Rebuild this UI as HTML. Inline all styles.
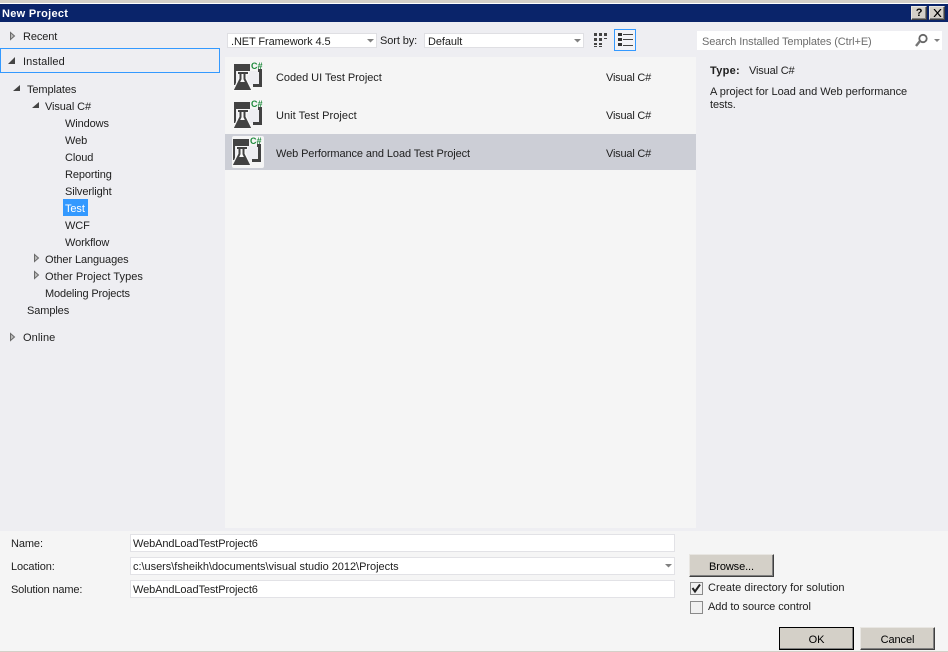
<!DOCTYPE html>
<html><head><meta charset="utf-8"><style>
html,body{margin:0;padding:0;width:948px;height:652px;overflow:hidden;background:#eeeef2}
body{position:relative;font:11px "Liberation Sans",sans-serif;color:#1e1e1e}
div,svg{position:absolute;box-sizing:border-box}
.t{white-space:nowrap;line-height:14px;height:14px;letter-spacing:-.1px}
.inp{background:#fff;border:1px solid #e2e2e6;height:18px;line-height:19px;padding-left:2px;white-space:nowrap;letter-spacing:-.1px}
.btn{background:#d4d0c8;border:1px solid;border-color:#e8e6e2 #404040 #404040 #e8e6e2;box-shadow:inset -1px -1px 0 #808080;text-align:center;letter-spacing:-.1px;color:#000}
.cb{width:13px;height:13px;background:#f0f0f0;border:1px solid #8a8a8a}
</style></head><body>
<div style="left:0;top:0;width:948px;height:4px;background:#d4d0c8;border-bottom:1px solid #fff"></div>
<div style="left:0;top:4px;width:948px;height:18px;background:#0a246a"></div>
<div class="t" style="left:2px;top:7px;color:#fff;font-weight:bold;letter-spacing:.3px">New Project</div>
<div class="btn" style="left:911px;top:6px;width:16px;height:14px;font:bold 11px/12px 'Liberation Sans';color:#000">?</div>
<div class="btn" style="left:929px;top:6px;width:16px;height:14px"><svg style="left:3px;top:2px" width="9" height="8"><path d="M1 0L8 8M8 0L1 8" stroke="#000" stroke-width="1.200"/></svg></div>

<!-- Left tree -->
<svg style="left:0;top:25px" width="60" height="330">
<path d="M10.500 7.500v7l4-3.500z" fill="#bbb" stroke="#6a6a6a"/>
<path d="M15 32v7h-7z" fill="#444"/>
<path d="M20 60v6h-7z" fill="#444"/>
<path d="M39 77v6h-7z" fill="#444"/>
<path d="M34.500 229.500v7l4-3.500z" fill="#bbb" stroke="#6a6a6a"/>
<path d="M34.500 246.500v7l4-3.500z" fill="#bbb" stroke="#6a6a6a"/>
<path d="M10.500 308.500v7l4-3.500z" fill="#bbb" stroke="#6a6a6a"/>
</svg>
<div class="t" style="left:23px;top:30px">Recent</div>
<div style="left:0;top:48px;width:220px;height:25px;border:1px solid #3399ff"></div>
<div class="t" style="left:23px;top:55px;letter-spacing:.1px">Installed</div>
<div class="t" style="left:27px;top:83px">Templates</div>
<div class="t" style="left:45px;top:100px">Visual C#</div>
<div class="t" style="left:65px;top:117px">Windows</div>
<div class="t" style="left:65px;top:134px">Web</div>
<div class="t" style="left:65px;top:151px">Cloud</div>
<div class="t" style="left:65px;top:168px">Reporting</div>
<div class="t" style="left:65px;top:185px">Silverlight</div>
<div style="left:63px;top:199px;width:25px;height:17px;background:#3399ff"></div>
<div class="t" style="left:65px;top:202px;color:#fff">Test</div>
<div class="t" style="left:65px;top:219px">WCF</div>
<div class="t" style="left:65px;top:236px">Workflow</div>
<div class="t" style="left:45px;top:253px">Other Languages</div>
<div class="t" style="left:45px;top:270px;letter-spacing:.05px">Other Project Types</div>
<div class="t" style="left:45px;top:287px;letter-spacing:-.15px">Modeling Projects</div>
<div class="t" style="left:27px;top:304px">Samples</div>
<div class="t" style="left:23px;top:331px;letter-spacing:.1px">Online</div>

<!-- Toolbar -->
<div class="inp" style="left:227px;top:33px;width:150px;height:15px;line-height:16px;padding-left:3px;border-color:#dfdfe3">.NET Framework 4.5</div>
<svg style="left:367px;top:39px" width="8" height="4"><path d="M0 0h7l-3.500 3.500z" fill="#808080"/></svg>
<div class="t" style="left:380px;top:34px">Sort by:</div>
<div class="inp" style="left:424px;top:33px;width:160px;height:15px;line-height:16px;padding-left:3px;border-color:#dfdfe3">Default</div>
<svg style="left:574px;top:39px" width="8" height="4"><path d="M0 0h7l-3.500 3.500z" fill="#808080"/></svg>
<svg style="left:594px;top:33px" width="14" height="15" fill="#444"><path d="M0 0h3v3H0zM5 0h3v3H5zM10 0h3v3h-3zM0 5h3v3H0zM5 5h3v3H5zM10 5h3v1h-3zM0 10h3v2H0zM5 10h3v2H5zM0 13h3v1H0zM5 13h3v1H5z"/></svg>
<div style="left:614px;top:29px;width:22px;height:22px;border:1px solid #3399ff;background:#f3f3f6"></div>
<svg style="left:618px;top:33px" width="15" height="14"><path d="M0 0h4v3H0zM0 5h4v3H0zM0 10h4v3H0z" fill="#333"/><path d="M5 1.500h10M5 6.500h10M5 12.500h10" stroke="#444" stroke-width="1" fill="none"/></svg>
<div style="left:697px;top:31px;width:245px;height:19px;background:#fff"></div>
<div class="t" style="left:702px;top:35px;color:#6d6d6d">Search Installed Templates (Ctrl+E)</div>
<svg style="left:914px;top:33px" width="26" height="15"><circle cx="9" cy="5.500" r="3.700" fill="none" stroke="#666" stroke-width="1.800"/><path d="M6 8L2 13" stroke="#777" stroke-width="2.400"/><path d="M20 6h6l-3 3z" fill="#808080"/></svg>

<!-- Center list -->
<div style="left:225px;top:57px;width:471px;height:472px;background:#f5f5f5"></div>
<div style="left:225px;top:134px;width:471px;height:36px;background:#ccced6"></div>
<div style="left:232px;top:136px;width:32px;height:32px;background:#f5f5f5;border-radius:2px"></div>

<svg style="left:233px;top:62px" width="30" height="30"><rect x="1" y="2" width="16" height="7" fill="#424242"/><rect x="1" y="2" width="2" height="21" fill="#424242"/><rect x="3" y="9" width="23" height="14" fill="#eeeef2"/><path d="M25 7h4v18h-9v-3h6V10h-1z" fill="#424242"/><path d="M4 9h12v4h-2v3l5 12v1H0v-1l5-12v-3H4z" fill="#f8f8f8"/><path d="M7.500 12v5l-5 10h14l-5-10v-5" fill="#f8f8f8" stroke="#424242" stroke-width="2"/><rect x="5" y="10" width="10" height="2" fill="#424242"/><path d="M5.500 20h8l3.500 8H2z" fill="#424242"/><text x="18" y="7" font-family="Liberation Sans" font-weight="bold" font-size="9" fill="#1e8a3c">C#</text></svg>
<svg style="left:233px;top:100px" width="30" height="30"><rect x="1" y="2" width="16" height="7" fill="#424242"/><rect x="1" y="2" width="2" height="21" fill="#424242"/><rect x="3" y="9" width="23" height="14" fill="#eeeef2"/><path d="M25 7h4v18h-9v-3h6V10h-1z" fill="#424242"/><path d="M4 9h12v4h-2v3l5 12v1H0v-1l5-12v-3H4z" fill="#f8f8f8"/><path d="M7.500 12v5l-5 10h14l-5-10v-5" fill="#f8f8f8" stroke="#424242" stroke-width="2"/><rect x="5" y="10" width="10" height="2" fill="#424242"/><path d="M5.500 20h8l3.500 8H2z" fill="#424242"/><text x="18" y="7" font-family="Liberation Sans" font-weight="bold" font-size="9" fill="#1e8a3c">C#</text></svg>
<svg style="left:232px;top:137px" width="30" height="30"><rect x="1" y="2" width="16" height="7" fill="#424242"/><rect x="1" y="2" width="2" height="21" fill="#424242"/><rect x="3" y="9" width="23" height="14" fill="#eeeef2"/><path d="M25 7h4v18h-9v-3h6V10h-1z" fill="#424242"/><path d="M4 9h12v4h-2v3l5 12v1H0v-1l5-12v-3H4z" fill="#f8f8f8"/><path d="M7.500 12v5l-5 10h14l-5-10v-5" fill="#f8f8f8" stroke="#424242" stroke-width="2"/><rect x="5" y="10" width="10" height="2" fill="#424242"/><path d="M5.500 20h8l3.500 8H2z" fill="#424242"/><text x="18" y="7" font-family="Liberation Sans" font-weight="bold" font-size="9" fill="#1e8a3c">C#</text></svg>

<div class="t" style="left:276px;top:71px;letter-spacing:-.05px">Coded UI Test Project</div>
<div class="t" style="left:606px;top:71px;letter-spacing:-.2px">Visual C#</div>
<div class="t" style="left:276px;top:109px;letter-spacing:.05px">Unit Test Project</div>
<div class="t" style="left:606px;top:109px;letter-spacing:-.2px">Visual C#</div>
<div class="t" style="left:276px;top:147px">Web Performance and Load Test Project</div>
<div class="t" style="left:606px;top:147px;letter-spacing:-.2px">Visual C#</div>

<!-- Right panel -->
<div class="t" style="left:710px;top:64px;font-weight:bold;letter-spacing:.3px">Type:</div>
<div class="t" style="left:749px;top:64px;letter-spacing:-.15px">Visual C#</div>
<div class="t" style="left:710px;top:85px;letter-spacing:-.02px">A project for Load and Web performance</div>
<div class="t" style="left:710px;top:98px">tests.</div>

<!-- Bottom -->
<div style="left:0;top:531px;width:948px;height:120px;background:#f5f5f5"></div>
<div style="left:0;top:528px;width:948px;height:3px;background:#eeeef2"></div>
<div style="left:0;top:651px;width:948px;height:1px;background:#d4d0c8"></div>
<div class="t" style="left:11px;top:537px">Name:</div>
<div class="t" style="left:11px;top:560px">Location:</div>
<div class="t" style="left:11px;top:583px;letter-spacing:-.15px">Solution name:</div>
<div class="inp" style="left:130px;top:534px;width:545px">WebAndLoadTestProject6</div>
<div class="inp" style="left:130px;top:557px;width:545px;letter-spacing:-.03px">c:\users\fsheikh\documents\visual studio 2012\Projects</div>
<svg style="left:665px;top:564px" width="8" height="4"><path d="M0 0h7l-3.500 3.500z" fill="#808080"/></svg>
<div class="inp" style="left:130px;top:580px;width:545px">WebAndLoadTestProject6</div>
<div class="btn" style="left:689px;top:554px;width:85px;height:23px;line-height:24px">Browse...</div>
<div class="cb" style="left:690px;top:582px"><svg style="left:0;top:0" width="11" height="11"><path d="M1.500 5l2.500 3.500L9 1.500" fill="none" stroke="#222" stroke-width="2"/></svg></div>
<div class="t" style="left:708px;top:581px;letter-spacing:.05px">Create directory for solution</div>
<div class="cb" style="left:690px;top:601px"></div>
<div class="t" style="left:708px;top:600px;letter-spacing:-.05px">Add to source control</div>
<div class="btn" style="left:779px;top:627px;width:75px;height:23px;line-height:24px;outline:1px solid #000;outline-offset:-1px">OK</div>
<div class="btn" style="left:860px;top:627px;width:75px;height:23px;line-height:24px">Cancel</div>
</body></html>
